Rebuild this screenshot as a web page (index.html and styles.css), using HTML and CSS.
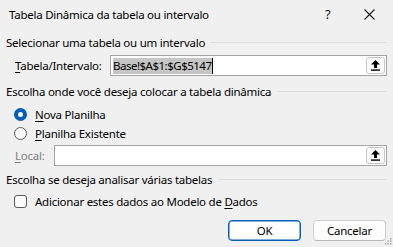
FILE: index.html
```html
<!DOCTYPE html>
<html lang="pt-BR">
<head>
<meta charset="utf-8">
<title>Tabela Dinâmica</title>
<link rel="stylesheet" href="styles.css">
</head>
<body>
<div class="dialog">
  <div class="titlebar">
    <span class="title">Tabela Dinâmica da tabela ou intervalo</span>
    <span class="help">?</span>
    <span class="close"><svg width="11" height="11" viewBox="0 0 11 11"><path d="M0.5 0.5 L10.5 10.5 M10.5 0.5 L0.5 10.5" stroke="#1a1a1a" stroke-width="1.1" fill="none"/></svg></span>
  </div>
  <div class="content">
    <div class="group-head"><span>Selecionar uma tabela ou um intervalo</span><span class="rule"></span></div>
    <div class="field-row">
      <span class="label label-wide"><u>T</u>abela/Intervalo:</span>
      <div class="input">
        <span class="value"><span class="sel">Base!$A$1:$G$5147</span><span class="caret"></span></span>
        <span class="pick"><svg width="9" height="11" viewBox="0 0 9 11"><path d="M4.5 0 L9 4.6 L6 4.6 L6 8 L3 8 L3 4.6 L0 4.6 Z" fill="#000"/><rect x="0" y="9.4" width="9" height="1.4" fill="#000"/></svg></span>
      </div>
    </div>
    <div class="group-head gh2"><span>Escolha onde você deseja colocar a tabela dinâmica</span><span class="rule"></span></div>
    <div class="radio-row r1"><span class="radio checked"></span><span><u>N</u>ova Planilha</span></div>
    <div class="radio-row"><span class="radio"></span><span><u>P</u>lanilha Existente</span></div>
    <div class="field-row local-row">
      <span class="label label-narrow disabled"><u>L</u>ocal:</span>
      <div class="input">
        <span class="value"></span>
        <span class="pick"><svg width="9" height="11" viewBox="0 0 9 11"><path d="M4.5 0 L9 4.6 L6 4.6 L6 8 L3 8 L3 4.6 L0 4.6 Z" fill="#000"/><rect x="0" y="9.4" width="9" height="1.4" fill="#000"/></svg></span>
      </div>
    </div>
    <div class="group-head gh3"><span>Escolha se deseja analisar várias tabelas</span><span class="rule"></span></div>
    <div class="check-row"><span class="checkbox"></span><span>Adicionar estes dados ao Modelo de <u>D</u>ados</span></div>
    <div class="buttons">
      <button class="btn primary">OK</button>
      <button class="btn">Cancelar</button>
    </div>
  </div>
  <svg class="grip" width="9" height="9" viewBox="0 0 9 9">
    <g fill="#a8a8a8">
      <rect x="7" y="1" width="1.5" height="1.5"/>
      <rect x="4.5" y="3.5" width="1.5" height="1.5"/><rect x="7" y="3.5" width="1.5" height="1.5"/>
      <rect x="2" y="6" width="1.5" height="1.5"/><rect x="4.5" y="6" width="1.5" height="1.5"/><rect x="7" y="6" width="1.5" height="1.5"/>
    </g>
  </svg>
</div>
</body>
</html>
```
FILE: styles.css
```css
html, body {
  margin: 0;
  padding: 0;
  background: #f0f0f0;
}
.dialog {
  position: relative;
  width: 393px;
  height: 247px;
  overflow: hidden;
  background: #f0f0f0;
  font-family: "Noto Sans", "Open Sans", sans-serif;
  font-size: 11.5px;
  letter-spacing: -0.25px;
  color: #000;
}
u { text-decoration: underline; text-underline-offset: 2px; text-decoration-thickness: 1px; }
.titlebar {
  height: 29px;
  display: flex;
  align-items: center;
  padding-left: 9px;
  padding-bottom: 1px;
  box-sizing: border-box;
}
.title { flex: 1; }
.help { width: 10px; margin-right: 29px; font-size: 13px; color: #1a1a1a; letter-spacing: 0; }
.close { width: 11px; height: 11px; margin-right: 18px; display: flex; }
.content {
  padding: 3px 6px 0 6px;
}
.group-head {
  height: 20px;
  display: flex;
  align-items: center;
}
.group-head .rule {
  flex: 1;
  height: 1px;
  background: #dcdcdc;
  margin-left: 6px;
}
.field-row {
  margin-top: 3px;
  height: 21px;
  display: flex;
  align-items: center;
  padding-left: 9px;
}
.label-wide { width: 95px; }
.label-narrow { width: 39px; }
.disabled { color: #808080; }
.input {
  flex: 1;
  height: 21px;
  box-sizing: border-box;
  border: 1px solid #a5a5a5;
  background: #fff;
  display: flex;
  align-items: center;
  padding-left: 2px;
  padding-right: 1px;
}
.value { flex: 1; display: flex; align-items: center; height: 17px; }
.sel { background: #c6c6c6; line-height: 16px; height: 16px; letter-spacing: -0.5px; }
.caret { width: 1px; height: 16px; background: #000; }
.pick {
  width: 19px;
  height: 17px;
  box-sizing: border-box;
  border: 1px solid #c8c8c8;
  border-radius: 3px;
  background: #fdfdfd;
  display: flex;
  align-items: center;
  justify-content: center;
}
.gh2 { margin-top: 5px; }
.radio-row {
  height: 19px;
  display: flex;
  align-items: center;
  padding-left: 8px;
}
.r1 { margin-top: 4px; }
.radio {
  width: 13px;
  height: 13px;
  box-sizing: border-box;
  border-radius: 50%;
  border: 1px solid #5a5a5a;
  background: #fbfbfb;
  margin-right: 8px;
}
.radio.checked {
  border: 4px solid #005fb8;
  background: #fff;
}
.local-row { margin-top: 2px; }
.gh3 { margin-top: 3px; }
.check-row {
  margin-top: 3px;
  height: 18px;
  display: flex;
  align-items: center;
  padding-left: 8px;
}
.checkbox {
  width: 13px;
  height: 13px;
  box-sizing: border-box;
  border: 1px solid #5a5a5a;
  border-radius: 3px;
  background: #fbfbfb;
  margin-right: 8px;
}
.buttons {
  margin-top: 10px;
  display: flex;
  justify-content: flex-end;
  gap: 12px;
  padding-right: 1px;
}
.btn {
  width: 73px;
  height: 21px;
  box-sizing: border-box;
  font-family: inherit;
  font-size: 11.5px;
  letter-spacing: -0.25px;
  color: #000;
  background: #fdfdfd;
  border: 1px solid #d0d0d0;
  border-bottom-color: #b8b8b8;
  border-radius: 4px;
  padding: 0;
}
.btn.primary {
  border: 1px solid #005fb8;
  box-shadow: inset 0 0 0 0.5px #005fb8;
  background: #fff;
}
.grip {
  position: absolute;
  right: 1px;
  bottom: 1px;
}
```
